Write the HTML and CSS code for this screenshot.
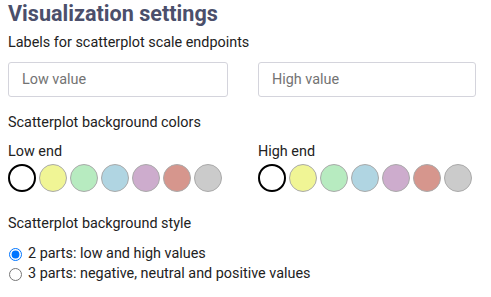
FILE: index.html
```html
<!DOCTYPE html>
<html lang="en">
<head>
    <meta charset="UTF-8">
    <title>Visualization settings</title>
    <link rel="stylesheet" href="styles.css">
</head>
<body>
    <div class="settings">
        <h2>Visualization settings</h2>

        <div class="section">
            <div class="section-title">Labels for scatterplot scale endpoints</div>
            <div class="columns">
                <input type="text" class="text-input" placeholder="Low value">
                <input type="text" class="text-input" placeholder="High value">
            </div>
        </div>

        <div class="section colors">
            <div class="section-title">Scatterplot background colors</div>
            <div class="columns">
                <div class="color-group">
                    <div class="group-label">Low end</div>
                    <div class="swatches">
                        <span class="swatch white selected"></span>
                        <span class="swatch yellow"></span>
                        <span class="swatch green"></span>
                        <span class="swatch blue"></span>
                        <span class="swatch purple"></span>
                        <span class="swatch red"></span>
                        <span class="swatch grey"></span>
                    </div>
                </div>
                <div class="color-group">
                    <div class="group-label">High end</div>
                    <div class="swatches">
                        <span class="swatch white selected"></span>
                        <span class="swatch yellow"></span>
                        <span class="swatch green"></span>
                        <span class="swatch blue"></span>
                        <span class="swatch purple"></span>
                        <span class="swatch red"></span>
                        <span class="swatch grey"></span>
                    </div>
                </div>
            </div>
        </div>

        <div class="section">
            <div class="section-title">Scatterplot background style</div>
            <label class="radio-row">
                <input type="radio" name="bgstyle" checked>
                2 parts: low and high values
            </label>
            <label class="radio-row">
                <input type="radio" name="bgstyle">
                3 parts: negative, neutral and positive values
            </label>
        </div>
    </div>
</body>
</html>
```

FILE: styles.css
```css
* {
    box-sizing: border-box;
}

body {
    margin: 0;
    font-family: Roboto, 'Liberation Sans', sans-serif;
    font-size: 14.4px;
    color: #222;
    background: white;
}

.settings {
    padding: 2px 8px;
}

h2 {
    margin: 0 0 9px;
    font-size: 21.6px;
    font-weight: bold;
    color: #4b4f6b;
    line-height: 24px;
}

.section {
    margin-bottom: 18px;
}

.section.colors {
    margin-bottom: 24px;
}

.section-title {
    line-height: 16px;
    margin-bottom: 11px;
}

.columns {
    display: grid;
    grid-template-columns: 220px 218px;
    column-gap: 30px;
}

.text-input {
    height: 35px;
    padding: 0 13px;
    border: 1px solid #d4d4dc;
    border-radius: 3px;
    font-family: inherit;
    font-size: 14.4px;
    color: #333;
}

.text-input::placeholder {
    color: #737373;
}

.group-label {
    line-height: 16px;
    margin: 2px 0 4px;
}

.swatches {
    display: flex;
    gap: 3px;
}

.swatch {
    width: 28px;
    height: 28px;
    border-radius: 50%;
    border: 1px solid #aaa;
}

.swatch.selected {
    border: 2px solid black;
}

.white { background: #fff; }
.yellow { background: #f0f595; }
.green { background: #b7ebc0; }
.blue { background: #b0d5e2; }
.purple { background: #cdaccd; }
.red { background: #d6968d; }
.grey { background: #cbcbcb; }

.section-title + .radio-row {
    margin-top: 12px;
}

.radio-row {
    display: flex;
    align-items: center;
    line-height: 20px;
}

.radio-row input {
    margin: 0 6px 0 1px;
    width: 13px;
    height: 13px;
}
```
